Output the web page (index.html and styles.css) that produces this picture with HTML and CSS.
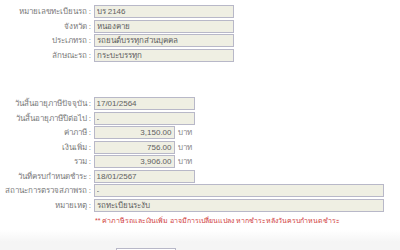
FILE: index.html
```html
<!DOCTYPE html>
<html lang="th">
<head>
    <meta charset="UTF-8">
    <title>ข้อมูลภาษีรถ</title>
    <link rel="stylesheet" href="styles.css">
</head>
<body>
    <div class="car-info">
        <div class="row">
            <label class="lbl">หมายเลขทะเบียนรถ :</label>
            <input class="field w-mid" type="text" value="บร 2146" readonly>
        </div>
        <div class="row">
            <label class="lbl">จังหวัด :</label>
            <input class="field w-mid" type="text" value="หนองคาย" readonly>
        </div>
        <div class="row">
            <label class="lbl">ประเภทรถ :</label>
            <input class="field w-mid" type="text" value="รถยนต์บรรทุกส่วนบุคคล" readonly>
        </div>
        <div class="row">
            <label class="lbl">ลักษณะรถ :</label>
            <input class="field w-mid" type="text" value="กระบะบรรทุก" readonly>
        </div>
    </div>

    <div class="tax-info">
        <div class="row">
            <label class="lbl">วันสิ้นอายุภาษีปัจจุบัน :</label>
            <input class="field w-date" type="text" value="17/01/2564" readonly>
        </div>
        <div class="row">
            <label class="lbl">วันสิ้นอายุภาษีปีต่อไป :</label>
            <input class="field w-date" type="text" value="-" readonly>
        </div>
        <div class="row">
            <label class="lbl">ค่าภาษี :</label>
            <input class="field w-num" type="text" value="3,150.00" readonly>
            <span class="unit">บาท</span>
        </div>
        <div class="row">
            <label class="lbl">เงินเพิ่ม :</label>
            <input class="field w-num" type="text" value="756.00" readonly>
            <span class="unit">บาท</span>
        </div>
        <div class="row">
            <label class="lbl">รวม :</label>
            <input class="field w-num" type="text" value="3,906.00" readonly>
            <span class="unit">บาท</span>
        </div>
        <div class="row">
            <label class="lbl">วันที่ครบกำหนดชำระ :</label>
            <input class="field w-date" type="text" value="18/01/2567" readonly>
        </div>
        <div class="row">
            <label class="lbl">สถานะการตรวจสภาพรถ :</label>
            <input class="field w-wide" type="text" value="-" readonly>
        </div>
        <div class="row">
            <label class="lbl">หมายเหตุ :</label>
            <input class="field w-wide" type="text" value="รถทะเบียนระงับ" readonly>
        </div>
        <p class="note">** ค่าภาษีรถและเงินเพิ่ม อาจมีการเปลี่ยนแปลง หากชำระหลังวันครบกำหนดชำระ</p>
    </div>

    <div class="footer">
        <button class="btn" type="button"></button>
    </div>
</body>
</html>
```
FILE: styles.css
```css
body {
    margin: 0;
    font-family: Tahoma, "Liberation Sans", "Noto Sans", sans-serif;
    font-size: 8px;
    color: #666666;
    background: #ffffff;
}

.car-info {
    padding-top: 5px;
    display: flex;
    flex-direction: column;
    gap: 1.5px;
}

.tax-info {
    margin-top: 35.5px;
    display: flex;
    flex-direction: column;
    gap: 1.57px;
}

.row {
    display: flex;
    align-items: center;
    height: 13px;
}

.lbl {
    width: 91px;
    padding-right: 2.5px;
    text-align: right;
    white-space: nowrap;
    color: #7a7a7a;
}

.field {
    box-sizing: border-box;
    height: 13px;
    margin: 0;
    padding: 0 2px;
    border: 1px solid #b8b8c8;
    background-color: #efefe3;
    font-family: inherit;
    font-size: 8px;
    color: #606060;
    outline: none;
}

.w-mid { width: 140px; }
.w-date { width: 101px; }
.w-wide { width: 290px; }

.w-num {
    width: 81px;
    text-align: right;
}

.unit {
    margin-left: 3px;
    color: #888888;
}

.note {
    margin: 1px 0 0 95px;
    font-size: 7px;
    color: #d04040;
}

.footer {
    margin-top: 4px;
    height: 30px;
    background: linear-gradient(#ffffff, #f5f5f5 40%);
    padding-top: 18px;
    box-sizing: border-box;
}

.btn {
    display: block;
    margin-left: 116px;
    width: 60px;
    height: 14px;
    border: 1px solid #b8b8c8;
    background: #ffffff;
}
```
